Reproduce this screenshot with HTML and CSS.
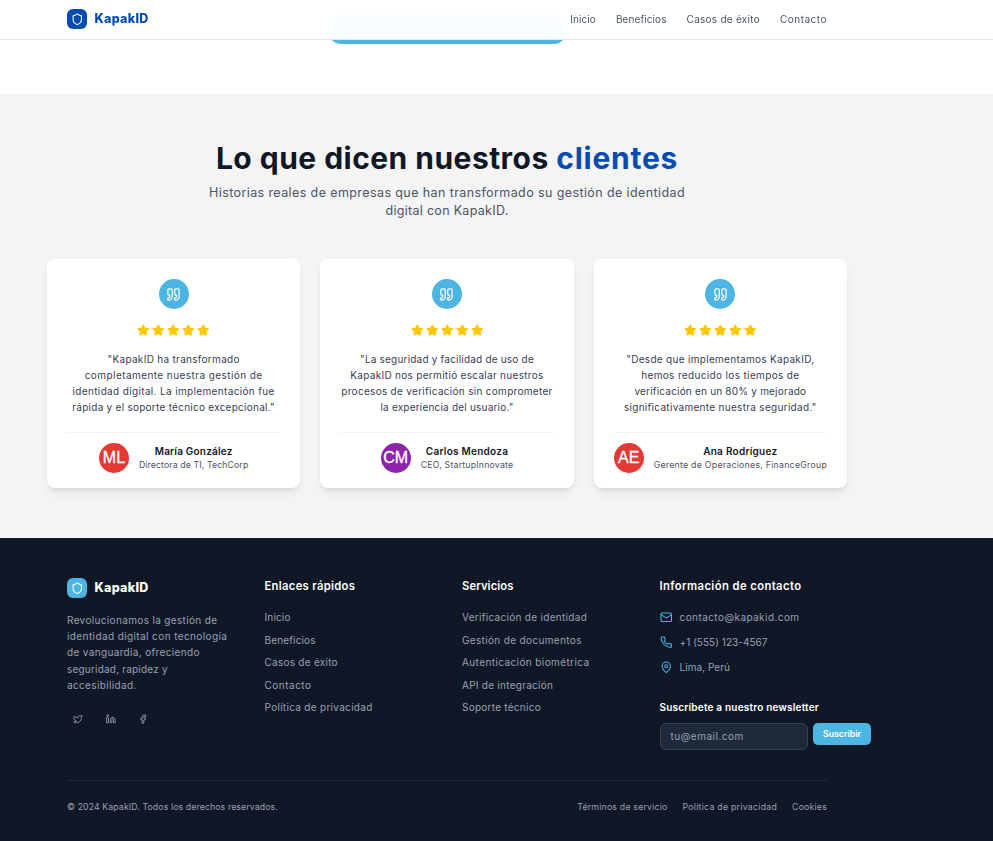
FILE: index.html
```html
<!DOCTYPE html>
<html lang="es">
<head>
<meta charset="utf-8">
<title>KapakID</title>
<link rel="stylesheet" href="styles.css">
</head>
<body>
<svg width="0" height="0" class="sprite" aria-hidden="true">
  <symbol id="shield" viewBox="0 0 24 24"><path d="M20 13c0 5-3.5 7.5-7.66 8.95a1 1 0 0 1-.67-.01C7.5 20.5 4 18 4 13V6a1 1 0 0 1 1-1c2 0 4.5-1.2 6.24-2.72a1.17 1.17 0 0 1 1.52 0C14.51 3.81 17 5 19 5a1 1 0 0 1 1 1z"/></symbol>
  <symbol id="quote" viewBox="0 0 24 24"><path d="M16 3a2 2 0 0 0-2 2v6a2 2 0 0 0 2 2 1 1 0 0 1 1 1v1a2 2 0 0 1-2 2 1 1 0 0 0-1 1v2a1 1 0 0 0 1 1 6 6 0 0 0 6-6V5a2 2 0 0 0-2-2z"/><path d="M5 3a2 2 0 0 0-2 2v6a2 2 0 0 0 2 2 1 1 0 0 1 1 1v1a2 2 0 0 1-2 2 1 1 0 0 0-1 1v2a1 1 0 0 0 1 1 6 6 0 0 0 6-6V5a2 2 0 0 0-2-2z"/></symbol>
  <symbol id="star" viewBox="0 0 24 24"><path d="M11.525 2.295a.53.53 0 0 1 .95 0l2.31 4.679a2.123 2.123 0 0 0 1.595 1.16l5.166.756a.53.53 0 0 1 .294.904l-3.736 3.638a2.123 2.123 0 0 0-.611 1.878l.882 5.14a.53.53 0 0 1-.771.56l-4.618-2.428a2.122 2.122 0 0 0-1.973 0L6.396 21.01a.53.53 0 0 1-.77-.56l.881-5.139a2.122 2.122 0 0 0-.611-1.879L2.16 9.795a.53.53 0 0 1 .294-.906l5.165-.755a2.122 2.122 0 0 0 1.597-1.16z"/></symbol>
  <symbol id="stars" viewBox="0 0 145 25"><use href="#star" width="25" height="25"/><use href="#star" x="30" width="25" height="25"/><use href="#star" x="60" width="25" height="25"/><use href="#star" x="90" width="25" height="25"/><use href="#star" x="120" width="25" height="25"/></symbol>
  <symbol id="twitter" viewBox="0 0 24 24"><path d="M22 4s-.7 2.1-2 3.4c1.6 10-9.4 17.3-18 11.6 2.2.1 4.4-.6 6-2C3 15.5.5 9.6 3 5c2.2 2.6 5.6 4.1 9 4-.9-4.2 4-6.6 7-3.8 1.1 0 3-1.2 3-1.2z"/></symbol>
  <symbol id="linkedin" viewBox="0 0 24 24"><path d="M16 8a6 6 0 0 1 6 6v7h-4v-7a2 2 0 0 0-4 0v7h-4v-7a6 6 0 0 1 6-6z"/><rect width="4" height="12" x="2" y="9"/><circle cx="4" cy="4" r="2"/></symbol>
  <symbol id="facebook" viewBox="0 0 24 24"><path d="M18 2h-3a5 5 0 0 0-5 5v3H7v4h3v8h4v-8h3l1-4h-4V7a1 1 0 0 1 1-1h3z"/></symbol>
  <symbol id="mail" viewBox="0 0 24 24"><rect x="2" y="4" width="20" height="16" rx="2"/><path d="m22 7-8.991 5.727a2 2 0 0 1-2.009 0L2 7"/></symbol>
  <symbol id="phone" viewBox="0 0 24 24"><path d="M22 16.92v3a2 2 0 0 1-2.18 2 19.79 19.79 0 0 1-8.63-3.07 19.5 19.5 0 0 1-6-6 19.79 19.79 0 0 1-3.07-8.67A2 2 0 0 1 4.11 2h3a2 2 0 0 1 2 1.72 12.84 12.84 0 0 0 .7 2.81 2 2 0 0 1-.45 2.11L8.09 9.91a16 16 0 0 0 6 6l1.27-1.27a2 2 0 0 1 2.11-.45 12.84 12.84 0 0 0 2.81.7A2 2 0 0 1 22 16.92z"/></symbol>
  <symbol id="pin" viewBox="0 0 24 24"><path d="M20 10c0 4.993-5.539 10.193-7.399 11.799a1 1 0 0 1-1.202 0C9.539 20.193 4 14.993 4 10a8 8 0 0 1 16 0"/><circle cx="12" cy="10" r="3"/></symbol>
</svg>

<header class="topbar">
  <div class="container topbar-inner">
    <a class="brand"><span class="brand-mark"><svg><use href="#shield"/></svg></span><span class="brand-name">KapakID</span></a>
    <nav class="nav"><a class="ls-10">Inicio</a><a class="ls-10">Beneficios</a><a class="ls-25">Casos de éxito</a><a class="ls-50">Contacto</a></nav>
  </div>
</header>

<div class="hero-end"><div class="hero-button"></div></div>

<section class="testimonials">
  <div class="wrap">
    <h2>Lo que dicen nuestros <em>clientes</em></h2>
    <p class="lead"><span class="ls-40">Historias reales de empresas que han transformado su gestión de identidad</span><br><span class="ls-30">digital con KapakID.</span></p>
    <div class="cards">
      <article class="card">
        <div class="quote"><svg><use href="#quote"/></svg></div>
        <svg class="stars"><use href="#stars"/></svg>
        <p class="text"><span class="ls-30">"KapakID ha transformado</span><br><span class="ls-45">completamente nuestra gestión de</span><br><span class="ls-35">identidad digital. La implementación fue</span><br><span class="ls-25">rápida y el soporte técnico excepcional."</span></p>
        <div class="author"><div class="avatar red">ML</div><div class="who"><b class="ls-20">María González</b><small class="ls-10">Directora de TI, TechCorp</small></div></div>
      </article>
      <article class="card">
        <div class="quote"><svg><use href="#quote"/></svg></div>
        <svg class="stars"><use href="#stars"/></svg>
        <p class="text"><span class="ls-20">"La seguridad y facilidad de uso de</span><br><span class="ls-30">KapakID nos permitió escalar nuestros</span><br><span class="ls-30">procesos de verificación sin comprometer</span><br><span class="ls-20">la experiencia del usuario."</span></p>
        <div class="author"><div class="avatar purple">CM</div><div class="who"><b class="ls-25">Carlos Mendoza</b><small class="ls-20">CEO, StartupInnovate</small></div></div>
      </article>
      <article class="card">
        <div class="quote"><svg><use href="#quote"/></svg></div>
        <svg class="stars"><use href="#stars"/></svg>
        <p class="text"><span class="ls-30">"Desde que implementamos KapakID,</span><br><span class="ls-35">hemos reducido los tiempos de</span><br><span class="ls-20">verificación en un 80% y mejorado</span><br><span class="ls-30">significativamente nuestra seguridad."</span></p>
        <div class="author"><div class="avatar red">AE</div><div class="who"><b class="ls-25">Ana Rodríguez</b><small class="ls-25">Gerente de Operaciones, FinanceGroup</small></div></div>
      </article>
    </div>
  </div>
</section>

<footer class="footer">
  <div class="container">
    <div class="columns">
      <div>
        <a class="brand light"><span class="brand-mark"><svg><use href="#shield"/></svg></span><span class="brand-name">KapakID</span></a>
        <p class="about"><span class="ls-35">Revolucionamos la gestión de</span><br><span class="ls-40">identidad digital con tecnología</span><br><span class="ls-35">de vanguardia, ofreciendo</span><br><span class="ls-20">seguridad, rapidez y</span><br><span class="ls-35">accesibilidad.</span></p>
        <div class="social"><a><svg><use href="#twitter"/></svg></a><a><svg><use href="#linkedin"/></svg></a><a><svg><use href="#facebook"/></svg></a></div>
      </div>
      <div>
        <h3 class="ls-30">Enlaces rápidos</h3>
        <ul class="links"><li class="ls-15">Inicio</li><li class="ls-15">Beneficios</li><li class="ls-25">Casos de éxito</li><li class="ls-50">Contacto</li><li class="ls-30">Política de privacidad</li></ul>
      </div>
      <div>
        <h3 class="ls-10">Servicios</h3>
        <ul class="links"><li class="ls-30">Verificación de identidad</li><li class="ls-35">Gestión de documentos</li><li class="ls-40">Autenticación biométrica</li><li class="ls-25">API de integración</li><li class="ls-25">Soporte técnico</li></ul>
      </div>
      <div>
        <h3 class="ls-40">Información de contacto</h3>
        <ul class="contact"><li><svg><use href="#mail"/></svg><span class="ls-45">contacto@kapakid.com</span></li><li><svg><use href="#phone"/></svg><span class="ls-5">+1 (555) 123-4567</span></li><li><svg><use href="#pin"/></svg><span class="ls-5">Lima, Perú</span></li></ul>
        <h4 class="ls-20">Suscríbete a nuestro newsletter</h4>
        <form class="subscribe"><div class="field ls-50">tu@email.com</div><button type="button">Suscribir</button></form>
      </div>
    </div>
    <div class="legal"><span class="ls-10">© 2024 KapakID. Todos los derechos reservados.</span><nav><a class="ls-20">Términos de servicio</a><a class="ls-25">Política de privacidad</a><a class="ls-20">Cookies</a></nav></div>
  </div>
</footer>
</body>
</html>
```

FILE: styles.css
```css
* { box-sizing: border-box; margin: 0; padding: 0; }
html { font-size: 10px; }
body { font: 400 10px/15px Inter, "Open Sans", sans-serif; background: #fff; color: #101828; overflow: hidden; }
.sprite { position: absolute; }
svg { display: block; fill: none; stroke: currentColor; stroke-width: 2; stroke-linecap: round; stroke-linejoin: round; }
ul { list-style: none; }

/* Letter tracking, in hundredths of a pixel */
.ls-5 { letter-spacing: .05px; }
.ls-10 { letter-spacing: .1px; }
.ls-15 { letter-spacing: .15px; }
.ls-20 { letter-spacing: .2px; }
.ls-25 { letter-spacing: .26px; }
.ls-30 { letter-spacing: .3px; }
.ls-35 { letter-spacing: .35px; }
.ls-40 { letter-spacing: .4px; }
.ls-45 { letter-spacing: .43px; }
.ls-50 { letter-spacing: .5px; }

.wrap, .container { width: 800px; margin-left: 47px; }
.container { padding: 0 20px; }

/* Header */
.topbar { position: absolute; inset: 0 0 auto; height: 40px; z-index: 2; background: rgba(255,255,255,.96); backdrop-filter: blur(4px); border-bottom: 1px solid #e5e7eb; }
.topbar-inner { display: flex; justify-content: space-between; align-items: center; height: 39px; }
.brand { display: flex; align-items: center; gap: 7.5px; color: #044bb1; }
.brand-mark { display: flex; align-items: center; justify-content: center; width: 20px; height: 20px; border-radius: 6px; background: #044bb1; color: #fff; }
.topbar .brand { margin-top: -1px; }
.brand-mark svg { width: 12.5px; height: 12.5px; }
.brand-name { font-size: 12.5px; font-weight: 800; line-height: 17.5px; letter-spacing: .3px; }
.light { color: #fff; }
.light .brand-mark { background: #4db5e3; }
.nav { display: flex; gap: 20px; color: #4a5565; }
.hero-end { height: 94px; display: flex; justify-content: center; width: 894px; }
.hero-button { width: 235px; height: 28px; margin-top: 16px; border-radius: 10px; background: #4db5e3; }

/* Testimonials */
.testimonials { height: 444px; padding-top: 49px; background: #f4f4f4; text-align: center; }
h2 { font-size: 30px; line-height: 30px; font-weight: 700; letter-spacing: .46px; white-space: nowrap; }
h2 em { font-style: normal; color: #044bb1; letter-spacing: .75px; }
.lead { margin-top: 11px; font-size: 12.5px; line-height: 17.5px; color: #4a5565; }
.cards { display: grid; grid-template-columns: repeat(3, 1fr); gap: 20px; margin-top: 40px; }
.card { padding: 20px 20px 15px; border-radius: 8px; background: #fff; box-shadow: 0 6px 10px -2px rgba(0,0,0,.09), 0 3px 5px -3px rgba(0,0,0,.1); }
.quote { display: flex; align-items: center; justify-content: center; width: 30px; height: 30px; margin: 0 auto 15px; border-radius: 50%; background: #4db5e3; color: #fff; }
.quote svg { width: 15px; height: 15px; }
.stars { width: 72.5px; height: 12.5px; margin: 0 auto 14px; color: #fdc700; fill: currentColor; }
.text { line-height: 16.2px; color: #364153; white-space: nowrap; }
.author { display: flex; justify-content: center; align-items: center; gap: 10px; margin-top: 17px; padding-top: 10px; border-top: 1px solid #f3f4f6; white-space: nowrap; }
.avatar { flex: none; width: 30px; height: 30px; border-radius: 50%; color: #fff; font: 16px/30px "Liberation Sans", sans-serif; -webkit-text-stroke: .3px #fff; }
.red { background: #e53935; }
.purple { background: #8e24aa; }
.who { padding-bottom: 2px; }
.who b, .who small { display: block; }
.who b { font-weight: 600; line-height: 15px; }
.who small { font-size: 8.75px; line-height: 12.5px; color: #4a5565; }

/* Footer */
.footer { height: 303px; padding-top: 40px; background: #101828; color: #99a1af; white-space: nowrap; }
.columns { display: grid; grid-template-columns: repeat(4, 167.5px); gap: 30px; height: 202px; }
.about { margin-top: 14px; line-height: 16.2px; }
.social { display: flex; gap: 10px; margin-top: 15px; }
.social a { display: flex; align-items: center; justify-content: center; width: 22.5px; height: 22.5px; }
.social svg { width: 10px; height: 10px; }
h3 { margin-bottom: 15px; font-size: 11.25px; line-height: 17.5px; font-weight: 600; color: #fff; }
.links { display: grid; gap: 7.5px; margin-top: -.4px; }
.contact { display: grid; gap: 10px; }
.contact li { display: flex; align-items: center; gap: 7.5px; }
.contact span { padding-bottom: 2px; line-height: 13px; }
.contact svg { width: 12.5px; height: 12.5px; margin-top: -1px; color: #4db5e3; }
h4 { margin: 24px 0 8.5px; font-size: 10px; line-height: 15px; font-weight: 600; color: #fff; }
.subscribe { display: flex; align-items: flex-start; gap: 5px; }
.field { flex: none; width: 148.5px; height: 27px; padding: 0 10px; border: 1px solid #364153; border-radius: 6px; background: #1e2939; line-height: 25px; color: #99a1af; }
.subscribe button { flex: none; width: 58px; height: 22px; border: 0; border-radius: 5px; background: #4db5e3; color: #fff; font: 600 8.75px/22px Inter, sans-serif; }
.legal { display: flex; justify-content: space-between; padding-top: 20px; border-top: 1px solid #1e2939; font-size: 8.75px; line-height: 12.5px; }
.legal nav { display: flex; gap: 15px; }
```
